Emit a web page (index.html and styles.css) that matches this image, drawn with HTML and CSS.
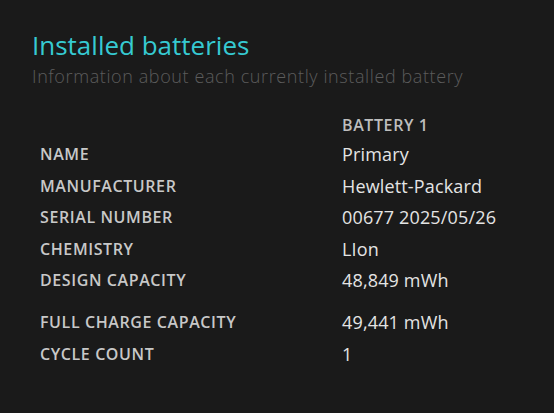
FILE: index.html
```html
<!DOCTYPE html>
<html>
<head>
<meta charset="utf-8">
<link rel="stylesheet" href="styles.css">
</head>
<body>
<div class="page">
  <h1 class="title">Installed batteries</h1>
  <p class="subtitle">Information about each currently installed battery</p>
  <div class="table">
    <div class="row head"><span class="label"></span><span class="col-head">BATTERY 1</span></div>
    <div class="row"><span class="label">NAME</span><span class="value">Primary</span></div>
    <div class="row"><span class="label">MANUFACTURER</span><span class="value">Hewlett-Packard</span></div>
    <div class="row"><span class="label">SERIAL NUMBER</span><span class="value">00677 2025/05/26</span></div>
    <div class="row"><span class="label">CHEMISTRY</span><span class="value">LIon</span></div>
    <div class="row"><span class="label">DESIGN CAPACITY</span><span class="value">48,849 mWh</span></div>
    <div class="row gap"><span class="label">FULL CHARGE CAPACITY</span><span class="value">49,441 mWh</span></div>
    <div class="row"><span class="label">CYCLE COUNT</span><span class="value">1</span></div>
  </div>
</div>
</body>
</html>
```

FILE: styles.css
```css
html, body {
  margin: 0;
  padding: 0;
  background: #1a1a1a;
}
body {
  width: 554px;
  height: 413px;
  overflow: hidden;
  font-family: "Open Sans", "Noto Sans", sans-serif;
}
.page {
  padding: 29px 0 0 32px;
}
.title {
  margin: 0;
  font-size: 26px;
  font-weight: 500;
  color: #36cad2;
  line-height: 32px;
}
.subtitle {
  margin: 4px 0 0;
  font-size: 18px;
  font-weight: 300;
  letter-spacing: 0.6px;
  color: #5c5c5c;
  line-height: 22px;
}
.table {
  margin-top: 24px;
  padding-left: 8px;
}
.row {
  display: grid;
  grid-template-columns: 302px auto;
  height: 31.5px;
  line-height: 31.5px;
}
.row.head {
  height: 28px;
  line-height: 28px;
}
.row.gap {
  margin-top: 10.5px;
}
.label {
  font-size: 16px;
  font-weight: 600;
  letter-spacing: 0.6px;
  color: #c8c8c8;
}
.col-head {
  font-size: 16px;
  font-weight: 600;
  letter-spacing: 0.6px;
  color: #bebebe;
}
.value {
  font-size: 18px;
  letter-spacing: 0.15px;
  color: #e4e4e4;
}
```
